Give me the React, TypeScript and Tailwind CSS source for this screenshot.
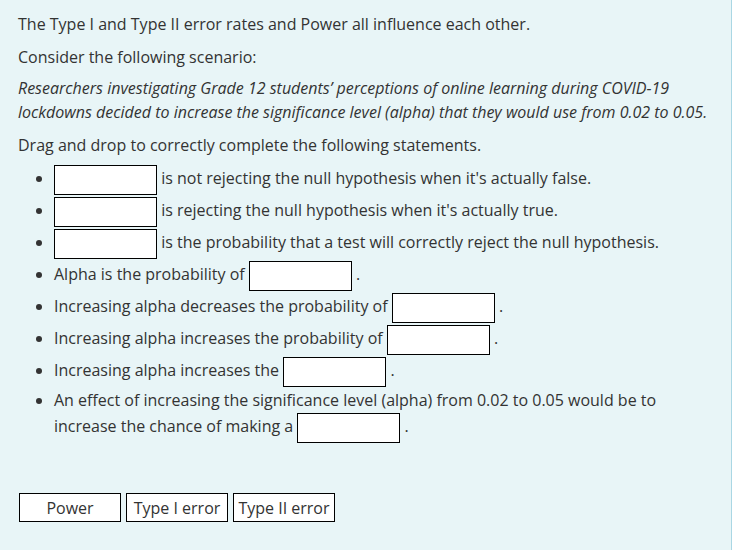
import React from "react";

const Box = () => (
  <span className="my-px inline-block h-[30px] w-[103px] border border-black bg-white align-middle" />
);

export default function App() {
  return (
    <div
      className="min-h-[550px] w-[732px] border-r border-[#aad7e4] bg-[#e8f5f7] px-[18px] pt-[12px] text-[16px] leading-6 text-[#333333]"
      style={{ fontFamily: '"Open Sans", "DejaVu Sans", sans-serif' }}
    >
      <p className="mb-[9px]">The Type I and Type II error rates and Power all influence each other.</p>
      <p className="mb-[7px]">Consider the following scenario:</p>
      <p className="mb-[9px] italic">
        Researchers investigating Grade 12 students’ perceptions of online learning during COVID-19 lockdowns decided to
        increase the significance level (alpha) that they would use from 0.02 to 0.05.
      </p>
      <p className="mb-[7px]">Drag and drop to correctly complete the following statements.</p>
      <ul className="list-disc pl-[36px]">
        <li>
          <Box /> is not rejecting the null hypothesis when it's actually false.
        </li>
        <li>
          <Box /> is rejecting the null hypothesis when it's actually true.
        </li>
        <li>
          <Box /> is the probability that a test will correctly reject the null hypothesis.
        </li>
        <li>
          Alpha is the probability of <Box /> .
        </li>
        <li>
          Increasing alpha decreases the probability of <Box /> .
        </li>
        <li>
          Increasing alpha increases the probability of <Box /> .
        </li>
        <li>
          Increasing alpha increases the <Box /> .
        </li>
        <li>
          An effect of increasing the significance level (alpha) from 0.02 to 0.05 would be to increase the chance of
          making a <Box /> .
        </li>
      </ul>
      <div className="ml-px mt-[49px] flex gap-[5px]">
        {["Power", "Type I error", "Type II error"].map((t) => (
          <div
            key={t}
            className="flex h-[29px] w-[102px] items-center justify-center border border-black bg-white"
          >
            {t}
          </div>
        ))}
      </div>
    </div>
  );
}
